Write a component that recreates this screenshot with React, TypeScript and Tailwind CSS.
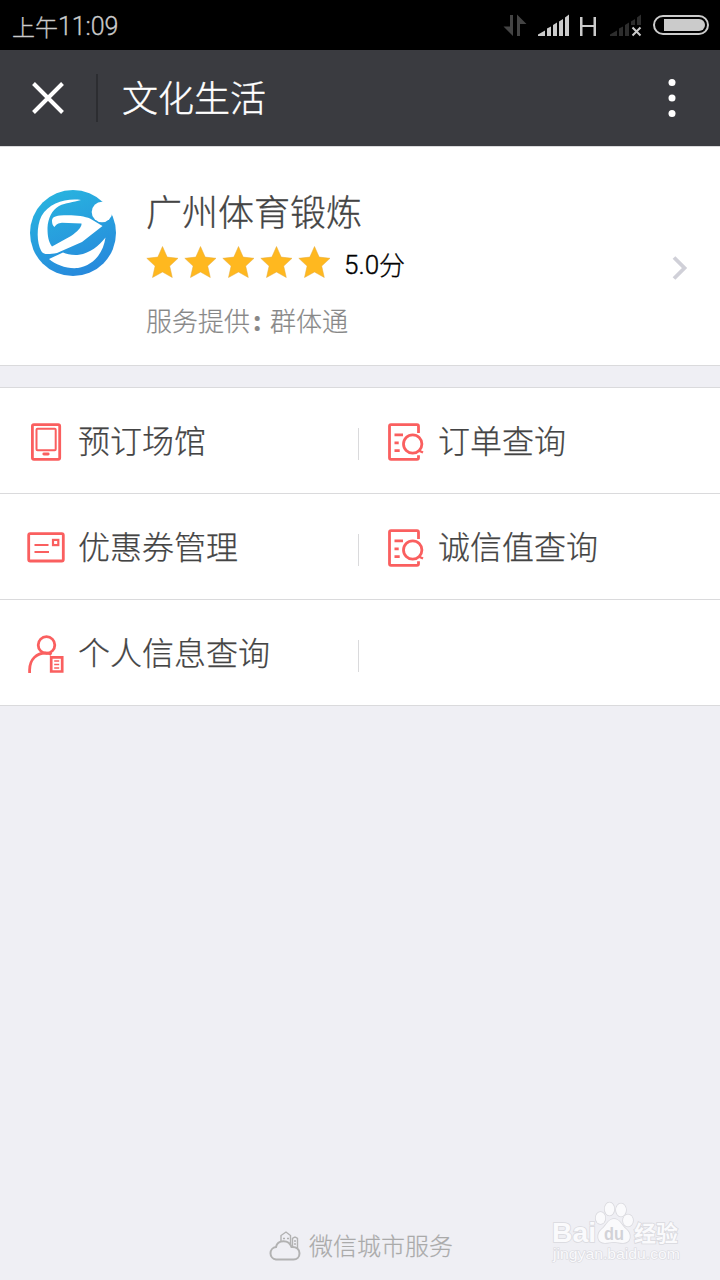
import type { ReactNode } from "react";

const cjk = "font-['Noto_Sans_CJK_SC',sans-serif]";

function StatusBar() {
  return (
    <div className="flex h-[50px] items-center bg-black pl-3 pr-[10px] text-[#cbcbcb]">
      <div className="flex items-center whitespace-nowrap pt-[2px] leading-none">
        <span className="text-[23px] font-light [-webkit-text-stroke:0.3px]">上午</span>
        <span className="pt-px font-[Roboto,sans-serif] text-[25px] font-light tracking-[-0.1px] [-webkit-text-stroke:0.3px]">11:09</span>
      </div>
      <svg className="ml-auto" width="208" height="50" viewBox="502 0 208 50" fill="#cbcbcb">
        <path d="M510 15h3v21L503.500 26.500h6.500zM517 36V14.500l9.500 9.500h-6.500v12z" fill="#444" />
        <path d="M538 36v-1.500l7-4V36zM547 36v-7.500l4-2V36zM553 36V25l4-2.500V36zM559 36V21.500l4-2.500V36zM565 36V17.500l4-3V36z" />
        <path d="M580 17h2.500v8h11v-8h2.500v19h-2.500v-9h-11v9h-2.500z" />
        <path d="M610 36v-1.500l7-4V36zM619 36v-7.500l4-2V36zM625 36V25l4-2.500V36zM631 25v-3.500l4-2.500V25zM637 25v-7.500l4-3V25z" fill="#2d2d2d" />
        <path d="M632.500 27.500l8 8m0-8l-8 8" stroke="#cbcbcb" strokeWidth="2" fill="none" />
        <rect x="654" y="16" width="54" height="18" rx="9" fill="none" stroke="#cbcbcb" strokeWidth="2" />
        <path d="M664 19h35a6 6 0 0 1 0 12h-35z" />
      </svg>
    </div>
  );
}

function NavBar() {
  return (
    <header className="flex h-[96px] items-center bg-[#3a3b40] text-white">
      <svg className="ml-[32px]" width="32" height="32" viewBox="0 0 32 32" fill="none" stroke="white" strokeWidth="4">
        <path d="M1.500 1.500l29 29m0-29l-29 29" />
      </svg>
      <div className="ml-8 h-12 w-[2px] bg-[#2c2d31]" />
      <h1 className="-mt-1 ml-6 text-[36px] font-light leading-none [-webkit-text-stroke:0.4px]">文化生活</h1>
      <svg className="ml-auto mr-11" width="8" height="40" viewBox="0 0 8 40" fill="white">
        <circle cx="4" cy="4.600" r="3.500" />
        <circle cx="4" cy="20" r="3.500" />
        <circle cx="4" cy="35.400" r="3.500" />
      </svg>
    </header>
  );
}

function Logo() {
  return (
    <svg className="mt-[43px] shrink-0" width="86" height="86" viewBox="0 0 86 86">
      <defs>
        <linearGradient id="logoBlue" x1="0.300" y1="0" x2="0.700" y2="1">
          <stop offset="0" stopColor="#28b3df" />
          <stop offset="1" stopColor="#2788dc" />
        </linearGradient>
      </defs>
      <circle cx="43" cy="43" r="43" fill="url(#logoBlue)" />
      <g fill="white">
        <circle cx="72" cy="22" r="10.300" />
        <path d="M51 10C36 8 19 13 11.500 26C6 37 7 53 11 60.500C13 65 18 64.500 27 63L52 52L72.500 36L60 28.500C54 25.500 40 24.500 30 25.500C24 26 22 28 22 31C22 34 23 36 24.500 37C26.500 34 28 33 32 32.700L51.500 33.500C52 37 47 42 41 46L22 56.500C18.500 52 17.500 46 17.500 38C18 28 22 20 29 16C36 12.500 43 12.500 51 10Z" />
        <path d="M75.500 47.500C69 56 60 63 49 64.800C42 65.500 37 64 33 62.500L19 69C26 75 37 79 48 78C62 75.500 73 65 75.500 47.500Z" />
      </g>
    </svg>
  );
}

function ProviderCard() {
  return (
    <section className="flex h-[220px] border-b border-t border-[#dadadc] bg-white pl-[30px] pr-[32px]">
      <Logo />
      <div className="ml-[30px] flex flex-col pt-[44px]">
        <h2 className="text-[36px] font-light leading-[38px] text-[#444] [-webkit-text-stroke:0.3px]">广州体育锻炼</h2>
        <div className="mt-[14px] flex h-[40px] items-center">
          <div className="flex gap-[6px]">
            {[0, 1, 2, 3, 4].map((i) => (
              <svg key={i} className="-mt-[3px]" width="32" height="32" viewBox="0 0 32 32" fill="#ffb81f" stroke="#e5ad3e" strokeWidth="0.500">
                <path d="M16.500 .5l4.700 10.600 10.800 1.200-8.300 7.800 2.600 11.400L16.500 26l-10 5.500 2.600-11.400L.8 12.300l11-1.200z" />
              </svg>
            ))}
          </div>
          <div className="ml-[14px] flex items-center pt-px text-[26px] leading-none text-black">
            <span className="pt-[3px] font-[Roboto,sans-serif] font-light [-webkit-text-stroke:0.4px]">5.0</span>
            <span className="font-light [-webkit-text-stroke:0.3px]">分</span>
          </div>
        </div>
        <p className="mt-[23px] flex text-[26px] font-light leading-[28px] text-[#888] [-webkit-text-stroke:0.2px]">
          <span>服务提供</span>
          <span className="w-5 pl-[3px] font-bold">:</span>
          <span>群体通</span>
        </p>
      </div>
      <svg className="ml-auto mt-[109px]" width="16" height="24" viewBox="0 0 16 24" fill="none" stroke="#d0d0d8" strokeWidth="3.800">
        <path d="M2 1.500L12.500 12 2 22.500" />
      </svg>
    </section>
  );
}

function IconFrame({ children }: { children: ReactNode }) {
  return (
    <svg width="38" height="40" viewBox="0 0 38 40" fill="none" stroke="#fa5f5f" strokeWidth="2.800" className="mt-[2px] shrink-0">
      {children}
    </svg>
  );
}

const tablet = (
  <IconFrame>
    <rect x="5.400" y="2.700" width="27.300" height="34.600" rx="1.500" />
    <rect x="9.500" y="6.800" width="19.200" height="21.400" rx="1" strokeWidth="2" />
    <path d="M16.800 32h4.400" strokeLinecap="round" />
  </IconFrame>
);

const search = (
  <IconFrame>
    <path d="M31.500 11V4.200q0-1.500-1.500-1.500H4q-1.500 0-1.500 1.500v31.600q0 1.500 1.500 1.500h26q1.500 0 1.500-1.500v-2.500" />
    <path d="M7.500 12.800h8.500M7.500 20.800h4.200M7.500 28.700h5.200" />
    <circle cx="25.700" cy="22" r="9.200" />
    <path d="M31.500 28.500l4.500 2" strokeWidth="2.400" />
  </IconFrame>
);

const card = (
  <IconFrame>
    <rect x="1.700" y="5.700" width="34.600" height="27.300" rx="1.500" />
    <path d="M7.500 16.900h14M7.500 24.100h14.500" strokeWidth="2" />
    <rect x="26" y="11.900" width="5.300" height="5.200" strokeWidth="2.200" />
  </IconFrame>
);

const person = (
  <IconFrame>
    <circle cx="19.500" cy="11" r="8.300" />
    <path d="M2.600 39v-3C2.600 25 10 19 18.500 19q3.500 0 6 1.500" />
    <path d="M24.200 23.300h11v14.200h-11z" strokeWidth="2.700" />
    <path d="M27.200 27h5M27.200 30.500h5M27.200 34h5" strokeWidth="1.700" />
  </IconFrame>
);

const rows: { icon: ReactNode; label: string }[][] = [
  [{ icon: tablet, label: "预订场馆" }, { icon: search, label: "订单查询" }],
  [{ icon: card, label: "优惠券管理" }, { icon: search, label: "诚信值查询" }],
  [{ icon: person, label: "个人信息查询" }],
];

function Menu() {
  return (
    <nav className="mt-[21px] border-t border-[#dadadc] bg-white">
      {rows.map((row) => (
        <div key={row[0].label} className="flex h-[106px] items-center border-b border-[#dadadc]">
          <a className="flex w-[358px] items-center gap-[13px] pl-[27px]">
            {row[0].icon}
            <span className="-mt-[3px] text-[32px] font-light leading-none text-[#444] [-webkit-text-stroke:0.25px]">{row[0].label}</span>
          </a>
          <div className="mt-[6px] h-8 w-px bg-[#dadadc]" />
          {row[1] && (
            <a className="flex items-center gap-[13px] pl-7">
              {row[1].icon}
              <span className="-mt-[3px] text-[32px] font-light leading-none text-[#444] [-webkit-text-stroke:0.25px]">{row[1].label}</span>
            </a>
          )}
        </div>
      ))}
    </nav>
  );
}

function Footer() {
  return (
    <footer className="relative mt-auto flex h-[70px] items-center justify-center pl-[2px]">
      <svg className="mr-[8px] mt-px" width="32" height="32" viewBox="0 0 32 32" fill="none" stroke="#b2b2b2" strokeWidth="2">
        <path d="M7 29.500a6.300 6.300 0 0 1 0-12.500C8.500 9.500 20 9 22.500 17c5-.5 8 2.500 8 6.300 0 3.700-2.500 6.200-6 6.200z" />
        <path d="M12 12V5.500l5-3.500L21.500 5.500v8.500M23.500 16V8.500l2-1.300h1l2 1.300V18" strokeWidth="1.400" />
        <path d="M14 8.500h2M18 8.500h2M25 11h2M25 14h2" strokeWidth="1.500" />
      </svg>
      <span className="text-[24px] font-light leading-none text-[#aaa] [-webkit-text-stroke:0.2px]">微信城市服务</span>
      <Watermark />
    </footer>
  );
}

function Watermark() {
  return (
    <svg className="absolute bottom-[8px] right-[36px]" width="134" height="74" viewBox="550 1198 134 74" fill="#fafafc" stroke="#d9d9de" strokeWidth="1.600" paintOrder="stroke">
      <text x="552" y="1242" fontFamily="Liberation Sans, sans-serif" fontWeight="bold" fontSize="28" textLength="44" lengthAdjust="spacingAndGlyphs">Bai</text>
      <ellipse cx="600.500" cy="1218" rx="4.800" ry="6" />
      <ellipse cx="609.500" cy="1209" rx="4.800" ry="6.500" />
      <ellipse cx="621" cy="1210" rx="5" ry="6.500" />
      <ellipse cx="628" cy="1220.500" rx="5" ry="6" />
      <path d="M614 1219c6 0 7 6 12 10 6 5 5 14-3 14-4 0-6-1-9-1s-6 1-9 1c-8 0-9-9-3-14 5-4 6-10 12-10z" />
      <text x="604" y="1240" fontFamily="Liberation Sans, sans-serif" fontWeight="bold" fontSize="19" fill="#d2d2d7" stroke="none" textLength="20" lengthAdjust="spacingAndGlyphs">du</text>
      <text x="634" y="1241" fontFamily="Noto Sans CJK SC, sans-serif" fontWeight="bold" fontSize="22">经验</text>
      <text x="553" y="1259" fontFamily="Liberation Sans, sans-serif" fontSize="14.500" strokeWidth="1.200" textLength="127" lengthAdjust="spacingAndGlyphs">jingyan.baidu.com</text>
    </svg>
  );
}

export default function App() {
  return (
    <main className={`${cjk} flex h-[1280px] w-[720px] flex-col overflow-hidden bg-[#efeff4]`} lang="zh-CN">
      <StatusBar />
      <NavBar />
      <ProviderCard />
      <Menu />
      <Footer />
    </main>
  );
}
